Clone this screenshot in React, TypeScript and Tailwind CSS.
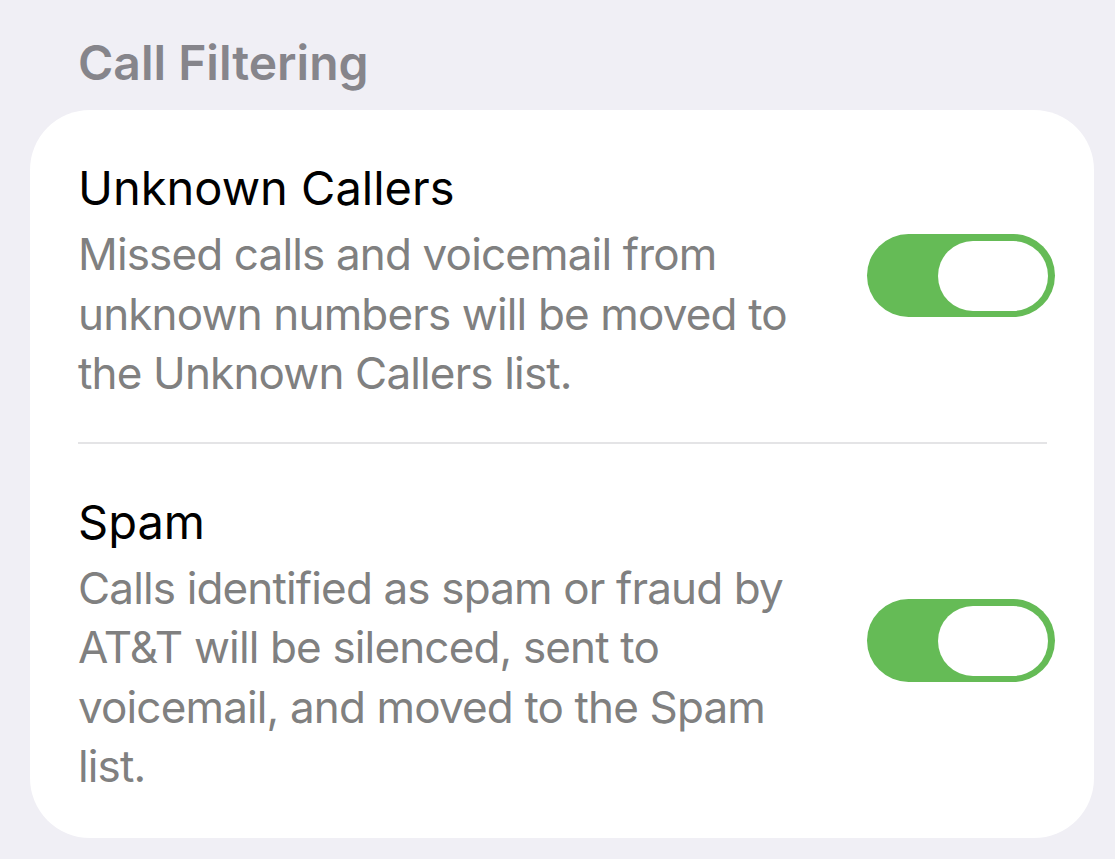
import React from 'react';

const Toggle = () => (
  <div className="flex h-[83px] w-[188px] shrink-0 items-center justify-end rounded-full bg-[#65bb56] pr-[7px]">
    <div className="h-[70px] w-[110px] rounded-full bg-white" />
  </div>
);

interface RowProps {
  title: string;
  description: string;
  last?: boolean;
}

const Row: React.FC<RowProps> = ({ title, description, last }) => (
  <div className="flex items-center pl-[48px] pr-[39px]">
    <div className={`w-[745px] pt-[48px] ${last ? 'pb-[41px]' : 'pb-[38px]'}`}>
      <div className="text-[47px] leading-[60px] text-black">{title}</div>
      <div className="mt-[7px] text-[44px] leading-[59.5px] tracking-[-0.85px] text-[#808080]">
        {description}
      </div>
    </div>
    <div className="flex-1" />
    <Toggle />
  </div>
);

export default function App() {
  return (
    <div
      className="min-h-screen w-[1115px] bg-[#f0eff5] pt-[33px]"
      style={{ fontFamily: 'Inter, "Noto Sans", sans-serif' }}
    >
      <div className="ml-[78px] mb-[17px] text-[48px] font-semibold leading-[60px] text-[#86858b]">
        Call Filtering
      </div>
      <div className="ml-[30px] w-[1064px] rounded-[60px] bg-white">
        <Row
          title="Unknown Callers"
          description="Missed calls and voicemail from unknown numbers will be moved to the Unknown Callers list."
        />
        <div className="ml-[48px] mr-[47px] h-[2px] bg-[#e4e4e6]" />
        <Row
          title="Spam"
          description="Calls identified as spam or fraud by AT&T will be silenced, sent to voicemail, and moved to the Spam list."
          last
        />
      </div>
    </div>
  );
}
